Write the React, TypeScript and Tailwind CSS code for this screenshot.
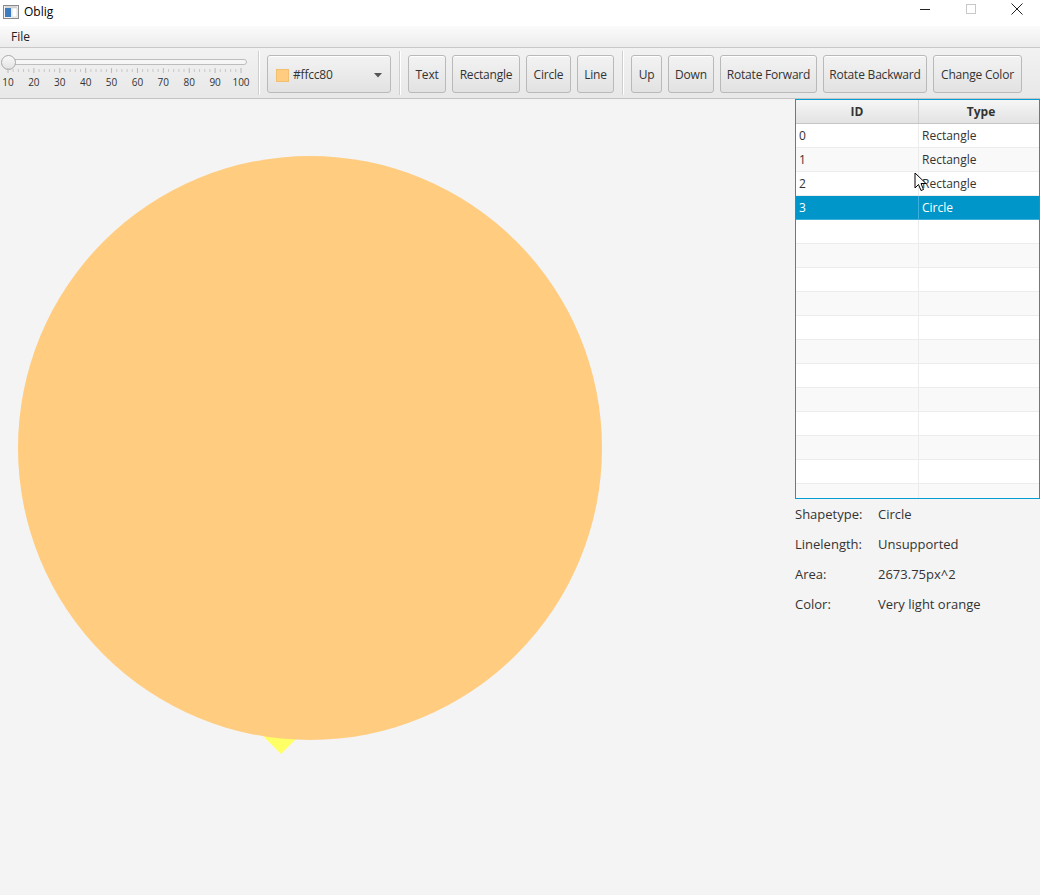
import React from "react";

const FONT = { fontFamily: '"Open Sans", "Noto Sans", sans-serif' };

function Sep() {
  return (
    <div className="w-[17px] h-full flex justify-center items-center">
      <div className="h-[44px] w-[2px] flex">
        <div className="w-[1px] h-full bg-[#cfcfcf]" />
        <div className="w-[1px] h-full bg-white" />
      </div>
    </div>
  );
}

function Btn({ label, w }: { label: string; w: string }) {
  return (
    <div
      className={`${w} h-[38px] pt-[2px] rounded-[3px] border border-[#b9b9b9] bg-gradient-to-b from-[#f3f3f3] to-[#e2e2e2] shadow-[inset_0_1px_0_#ffffff] flex items-center justify-center text-[12px] text-[#333] whitespace-nowrap tracking-[-0.2px]`}
    >
      {label}
    </div>
  );
}

function Slider() {
  const labels = [10, 20, 30, 40, 50, 60, 70, 80, 90, 100];
  const x0 = 8;
  const x1 = 241;
  const step = (x1 - x0) / 9;
  const ticks: React.ReactNode[] = [];
  for (let i = 0; i <= 45; i++) {
    const x = x0 + (step / 5) * i;
    const major = i % 5 === 0;
    ticks.push(
      <line
        key={i}
        x1={x}
        x2={x}
        y1={major ? 20 : 21}
        y2={major ? 25 : 24}
        stroke={major ? "#b8b8b8" : "#c8c8c8"}
        strokeWidth={1}
      />
    );
  }
  return (
    <div className="w-[250px] h-full relative">
      <svg width="256" height="50" className="absolute left-0 top-0 overflow-visible">
        <defs>
          <linearGradient id="thumbg" x1="0" y1="0" x2="0" y2="1">
            <stop offset="0" stopColor="#fafafa" />
            <stop offset="1" stopColor="#e2e2e2" />
          </linearGradient>
        </defs>
        <rect x="4.5" y="11.5" width="242" height="5" rx="2.5" fill="#f6f6f6" stroke="#bdbdbd" />
        <circle cx="8.5" cy="14.5" r="7" fill="url(#thumbg)" stroke="#a8a8a8" />
        {ticks}
        {labels.map((l, i) => (
          <text
            key={l}
            x={x0 + step * i}
            y={38}
            textAnchor="middle"
            fontSize="10"
            fill="#333"
            style={FONT}
          >
            {l}
          </text>
        ))}
      </svg>
    </div>
  );
}

export default function App() {
  const rows = [
    { id: "0", type: "Rectangle" },
    { id: "1", type: "Rectangle" },
    { id: "2", type: "Rectangle" },
    { id: "3", type: "Circle" },
  ];
  const allRows = Array.from({ length: 16 }, (_, i) => rows[i] ?? { id: "", type: "" });

  return (
    <div className="w-[1040px] h-[895px] flex flex-col bg-[#f4f4f4] overflow-hidden text-[#333]" style={FONT}>
      {/* Title bar */}
      <div className="h-[26px] bg-white flex items-center relative shrink-0">
        <svg width="16" height="14" className="ml-[3px] -mt-[3px]" viewBox="0 0 16 14">
          <rect x="0.5" y="0.5" width="15" height="13" fill="#f4f4f4" stroke="#8a8a8a" />
          <rect x="2" y="3" width="6" height="9" fill="#3d7cc0" />
          <rect x="9" y="3" width="5" height="9" fill="#ffffff" stroke="#c0c0c0" strokeWidth="0.5" />
          <rect x="2" y="1.5" width="12" height="1" fill="#bcbcbc" />
        </svg>
        <span className="ml-[5px] text-[12px] text-black -mt-[3px]">Oblig</span>
        <div className="absolute right-0 top-0 h-[18px] flex">
          <div className="w-[46px] h-full flex items-center justify-center">
            <div className="w-[10px] h-[1px] bg-[#222]" />
          </div>
          <div className="w-[46px] h-full flex items-center justify-center">
            <div className="w-[10px] h-[10px] border border-[#c8c8c8]" />
          </div>
          <div className="w-[46px] h-full flex items-center justify-center">
            <svg width="12" height="12" viewBox="0 0 12 12">
              <path d="M0.5 0.5 L11.5 11.5 M11.5 0.5 L0.5 11.5" stroke="#222" strokeWidth="1" />
            </svg>
          </div>
        </div>
      </div>

      {/* Menu bar */}
      <div className="h-[22px] shrink-0 bg-gradient-to-b from-[#fbfbfb] to-[#ececec] border-b border-[#c9c9c9] flex items-center">
        <span className="ml-[11px] text-[12px] text-[#222]">File</span>
      </div>

      {/* Toolbar */}
      <div className="h-[51px] shrink-0 bg-gradient-to-b from-[#f2f2f2] to-[#e8e8e8] border-b border-[#c4c4c4] flex items-start">
        <Slider />
        <Sep />
        <div className="mt-[7px] w-[124px] h-[38px] pt-[2px] rounded-[3px] border border-[#b9b9b9] bg-gradient-to-b from-[#f3f3f3] to-[#e2e2e2] shadow-[inset_0_1px_0_#ffffff] flex items-center text-[12px]">
          <div className="ml-[8px] w-[13px] h-[13px] bg-[#ffcc80] border border-[#f0c070]" />
          <span className="ml-[4px] tracking-[-0.2px]">#ffcc80</span>
          <svg width="8" height="5" viewBox="0 0 8 5" className="ml-auto mr-[8px]">
            <path d="M0 0 L8 0 L4 4.5 Z" fill="#555" />
          </svg>
        </div>
        <Sep />
        <div className="mt-[7px] flex gap-[6px]">
          <Btn label="Text" w="w-[38px]" />
          <Btn label="Rectangle" w="w-[68px]" />
          <Btn label="Circle" w="w-[45px]" />
          <Btn label="Line" w="w-[37px]" />
        </div>
        <Sep />
        <div className="mt-[7px] flex gap-[6px]">
          <Btn label="Up" w="w-[31px]" />
          <Btn label="Down" w="w-[46px]" />
          <Btn label="Rotate Forward" w="w-[97px]" />
          <Btn label="Rotate Backward" w="w-[104px]" />
          <Btn label="Change Color" w="w-[89px]" />
        </div>
      </div>

      {/* Content */}
      <div className="flex-1 flex min-h-0">
        <div className="w-[795px] h-full relative">
          <svg width="795" height="796" className="absolute left-0 top-0">
            <polygon points="249,623 313,623 281,655" fill="#ffff66" />
            <circle cx="310" cy="349" r="292" fill="#ffcc80" />
          </svg>
        </div>

        <div className="flex-1 flex flex-col min-w-0">
          {/* Table */}
          <div className="h-[400px] border border-[#039ed3] shadow-[inset_0_0_0_1px_#8fd2ec] overflow-hidden relative">
            <div className="w-[300px] flex flex-col">
              <div className="h-[24px] flex bg-gradient-to-b from-[#f6f6f6] to-[#e3e3e3] border-b border-[#c5c5c5] text-[12px] font-bold">
                <div className="w-[123px] border-r border-[#d0d0d0] flex items-center justify-center">ID</div>
                <div className="w-[124px] flex items-center justify-center">Type</div>
              </div>
              {allRows.map((r, i) => {
                const sel = i === 3;
                return (
                  <div
                    key={i}
                    className={`h-[24px] flex text-[12px] border-b ${
                      sel
                        ? "bg-[#0096c9] text-white border-[#3cb0da]"
                        : i % 2 === 0
                        ? "bg-white text-[#333] border-[#ececec]"
                        : "bg-[#f9f9f9] text-[#333] border-[#ececec]"
                    }`}
                  >
                    <div className={`w-[123px] border-r ${sel ? "border-[#3cb0da]" : "border-[#ececec]"} flex items-center pl-[3px]`}>
                      {r.id}
                    </div>
                    <div className="flex-1 flex items-center pl-[3px]">{r.type}</div>
                  </div>
                );
              })}
            </div>
            <svg width="14" height="22" viewBox="0 0 14 22" className="absolute left-[118px] top-[72px]">
              <path d="M1 1 L1 16 L4.5 12.5 L7 18.5 L9.5 17.5 L7 11.5 L12 11.5 Z" fill="#ffffff" stroke="#000" strokeWidth="1" strokeLinejoin="round" />
            </svg>
          </div>

          {/* Info */}
          <div className="flex flex-col pt-[1px] text-[13px] text-[#333]">
            {[
              ["Shapetype:", "Circle"],
              ["Linelength:", "Unsupported"],
              ["Area:", "2673.75px^2"],
              ["Color:", "Very light orange"],
            ].map(([k, v]) => (
              <div key={k} className="h-[30px] flex items-center">
                <div className="w-[83px]">{k}</div>
                <div>{v}</div>
              </div>
            ))}
          </div>
        </div>
      </div>
    </div>
  );
}
